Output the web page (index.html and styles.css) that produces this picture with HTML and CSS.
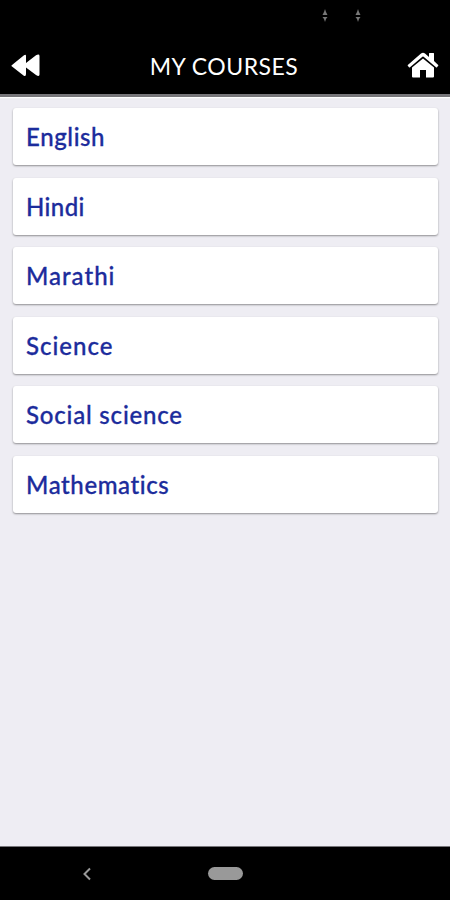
FILE: index.html
```html
<!DOCTYPE html>
<html lang="en">
<head>
    <meta charset="UTF-8">
    <meta name="viewport" content="width=device-width, initial-scale=1.0">
    <title>My Courses</title>
    <link rel="stylesheet" href="styles.css">
</head>
<body>
    <div class="status-bar">
        <svg class="signal" viewBox="0 0 6 14"><path d="M3 0 L4 3 L5.5 6 H0.5 L2 3 Z M0.5 8 H5.5 L4 10 L3 13 L2 10 Z"/></svg>
        <svg class="signal" viewBox="0 0 6 14"><path d="M3 0 L4 3 L5.5 6 H0.5 L2 3 Z M0.5 8 H5.5 L4 10 L3 13 L2 10 Z"/></svg>
    </div>

    <div class="header">
        <svg class="back-icon" viewBox="0 0 30 24"><path d="M1 11 L13 1.3 Q15 0 15 2 V9 L25 1.2 Q28.5 -0.5 28.5 2 V20.5 Q28.5 23 25 21 L15 13.5 V20 Q15 23 12.5 21.5 L1 12.5 Q0 11.7 1 11 Z"/></svg>
        <h1>MY COURSES</h1>
        <svg class="home-icon" viewBox="0 0 32 26"><path d="M0.8 13 L14 1.5 Q16 0 18 1.5 L22 5 V1.5 Q22 1 22.5 1 H26.5 Q27 1 27 1.5 V9 L31.2 13 Q31.6 13.4 31.2 13.8 L30 15.2 Q29.5 15.8 29 15.2 L16.6 4.8 Q16 4.3 15.4 4.8 L3 15.2 Q2.5 15.8 2 15.2 L0.8 13.8 Q0.4 13.4 0.8 13 Z"/><path d="M16 6.4 L27 15.6 V24.5 Q27 25.5 26 25.5 H19 V18 H13 V25.5 H6 Q5 25.5 5 24.5 V15.6 Z"/></svg>
    </div>

    <div class="course-list">
        <div class="course english">English</div>
        <div class="course hindi">Hindi</div>
        <div class="course marathi">Marathi</div>
        <div class="course science">Science</div>
        <div class="course social">Social science</div>
        <div class="course maths">Mathematics</div>
    </div>

    <div class="nav-bar">
        <svg class="nav-back" viewBox="0 0 8 14"><path d="M7 1.5 L1.5 7 L7 12.5"/></svg>
        <div class="nav-home"></div>
    </div>
</body>
</html>
```
FILE: styles.css
```css
* {
    margin: 0;
    padding: 0;
    box-sizing: border-box;
}

body {
    font-family: Lato, sans-serif;
    background: #eeedf3;
    height: 100vh;
    display: flex;
    flex-direction: column;
    overflow: hidden;
}

.status-bar {
    background: #000;
    height: 36px;
    padding: 9px 89.5px 0 0;
    display: flex;
    justify-content: flex-end;
    gap: 27px;
}

.signal {
    width: 6px;
    height: 14px;
    fill: #777;
}

.header {
    background: #000;
    height: 61px;
    padding: 2px 11px 0 11px;
    display: flex;
    justify-content: space-between;
    align-items: center;
    border-bottom: 3px solid #77767a;
    box-shadow: 0 1px 1px #fff;
}

.header h1 {
    color: #fff;
    font-size: 23px;
    font-weight: 400;
    line-height: 30px;
    letter-spacing: 0.5px;
}

.back-icon {
    width: 30px;
    height: 24px;
    fill: #fff;
}

.home-icon {
    width: 32px;
    height: 26px;
    margin-bottom: 2px;
    fill: #fff;
}

.course-list {
    flex: 1;
    padding: 11px 12px 0 13px;
}

.course {
    height: 57px;
    margin-bottom: 12.6px;
    padding: 0 13px;
    display: flex;
    align-items: center;
    background: #fff;
    border-radius: 3px;
    box-shadow: 0 1px 2px rgba(0, 0, 0, 0.4);
    color: #1c2c9c;
    font-size: 24px;
    font-weight: 500;
    letter-spacing: 0.8px;
    -webkit-text-stroke: 0.3px #1c2c9c;
}

.english {
    letter-spacing: 0.6px;
}

.hindi {
    letter-spacing: 0.4px;
}

.marathi,
.science {
    letter-spacing: 1px;
}

.maths {
    letter-spacing: 0.6px;
}

.nav-bar {
    background: #000;
    height: 54px;
    padding-left: 83px;
    display: flex;
    align-items: center;
    border-top: 1px solid #77767a;
}

.nav-back {
    width: 8px;
    height: 14px;
    margin-right: 117px;
    fill: none;
    stroke: #999;
    stroke-width: 2;
}

.nav-home {
    width: 35px;
    height: 13px;
    border-radius: 7px;
    background: #999;
}
```
